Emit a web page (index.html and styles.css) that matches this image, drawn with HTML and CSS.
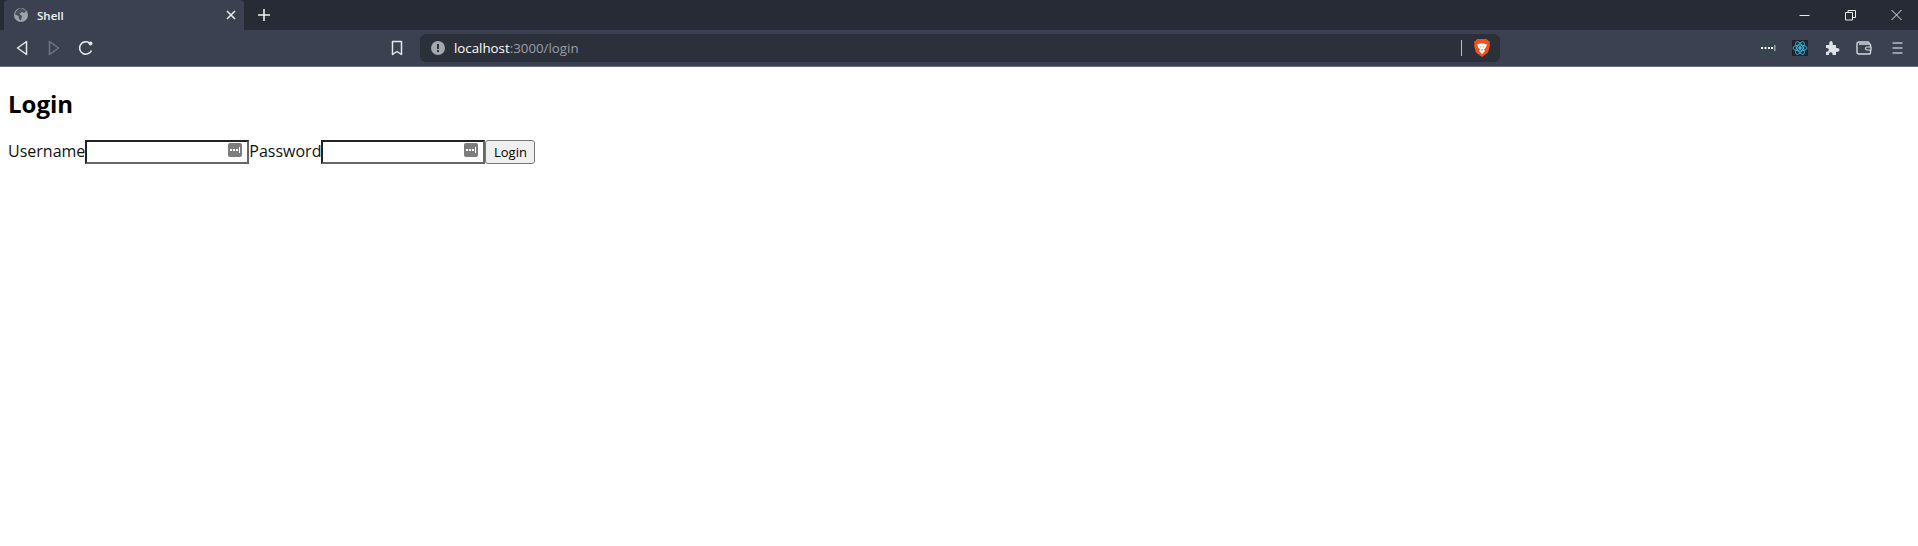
FILE: index.html

```html
<!DOCTYPE html>
<html lang="en">
<head>
  <meta charset="UTF-8">
  <title>Shell</title>
  <link rel="stylesheet" href="styles.css">
</head>
<body>
  <div class="titlebar">
    <div class="tab">
      <svg class="globe" width="16" height="16" viewBox="0 0 16 16">
        <circle cx="8" cy="8" r="7" fill="#9ea3ad"/>
        <path d="M8 1c1.500 1 3.500 1.200 5 2.500L11.500 6 8.500 5 6.500 7l2.500 2-1 4.500-2-1.500-.5-3L2 7.500C2.500 4 5 1.500 8 1z" fill="#4a505e"/>
      </svg>
      <span class="tab-title">Shell</span>
      <svg class="tab-close" width="10" height="10" viewBox="0 0 10 10">
        <path d="M1 1l8 8M9 1L1 9" stroke="#e8eaee" stroke-width="1.600"/>
      </svg>
    </div>
    <svg class="new-tab" width="14" height="14" viewBox="0 0 14 14">
      <path d="M7 1v12M1 7h12" stroke="#f0f1f4" stroke-width="1.600"/>
    </svg>
    <div class="window-btns">
      <svg width="11" height="12" viewBox="0 0 11 12"><path d="M.5 6.500h10" stroke="#e8eaee"/></svg>
      <svg width="11" height="12" viewBox="0 0 11 12"><path d="M.5 3.500h7v7.500h-7zM3 3.500V1.500h7.500V8.500h-3" fill="none" stroke="#e8eaee"/></svg>
      <svg width="11" height="12" viewBox="0 0 11 12"><path d="M.5 1l10 10M10.500 1l-10 10" stroke="#e8eaee"/></svg>
    </div>
  </div>

  <div class="toolbar">
    <div class="nav-btns">
      <svg width="12" height="16" viewBox="0 0 12 16"><path d="M10.500 1.500v13L1.500 8z" fill="none" stroke="#e4e6eb" stroke-width="1.500" stroke-linejoin="round"/></svg>
      <svg class="forward" width="12" height="16" viewBox="0 0 12 16"><path d="M1.500 1.500v13l9-6.500z" fill="none" stroke="#6f7583" stroke-width="1.500" stroke-linejoin="round"/></svg>
      <svg width="16" height="16" viewBox="0 0 16 16"><path d="M13.500 10.500A6.200 6.200 0 1 1 11.500 3" fill="none" stroke="#e4e6eb" stroke-width="1.600"/><circle cx="12.500" cy="3.500" r="2" fill="#e4e6eb"/></svg>
    </div>
    <svg class="bookmark" width="12" height="16" viewBox="0 0 12 16"><path d="M1.500 1.500h9v13L6 11.500l-4.500 3z" fill="none" stroke="#e4e6eb" stroke-width="1.500" stroke-linejoin="round"/></svg>
    <div class="urlbar">
      <svg class="info" width="14" height="14" viewBox="0 0 14 14">
        <circle cx="7" cy="7" r="7" fill="#a3a7b0"/>
        <rect x="6" y="3" width="2" height="5" fill="#2f333e"/>
        <rect x="6" y="9" width="2" height="2" fill="#2f333e"/>
      </svg>
      <span class="url"><span class="host">localhost</span>:3000/login</span>
      <span class="url-sep"></span>
      <svg class="brave" width="18" height="20" viewBox="0 0 18 20">
        <path d="M4.500 1h9L17 4 16.500 6 17 7.500 15 14.500 9 19 3 14.500 1 7.500 1.500 6 1 4z" fill="#f1511b"/>
        <path d="M4 6.500 7 5.500h4l3 1-1.500 3.500L11 11.500l1 1.500-3 3-3-3 1-1.500L5.500 10z" fill="#fff"/>
        <path d="M7 8.500h1.200L8 10zM9.800 8.500H11L10 10zM8 11.500h2L9 13z" fill="#f1511b"/>
      </svg>
    </div>
    <div class="ext-btns">
      <span class="ext-box ext-dots">
        <svg width="16" height="6" viewBox="0 0 16 6"><path d="M1 2h2v2H1zM4.500 2h2v2h-2zM8 2h2v2H8zM11 2h2v2h-2z" fill="#fff"/><rect x="14" y="0" width="1.500" height="6" fill="#9aa0ab"/></svg>
      </span>
      <span class="ext-box ext-react">
        <svg width="16" height="16" viewBox="0 0 16 16" fill="none" stroke="#35b5dc" stroke-width="1">
          <ellipse cx="8" cy="8" rx="7" ry="3"/>
          <ellipse cx="8" cy="8" rx="7" ry="3" transform="rotate(60 8 8)"/>
          <ellipse cx="8" cy="8" rx="7" ry="3" transform="rotate(120 8 8)"/>
          <circle cx="8" cy="8" r="1.300" fill="#35b5dc"/>
        </svg>
      </span>
      <svg width="16" height="16" viewBox="0 0 16 16"><path d="M2 5h3.200C4.800 2.500 6 1 7 1s2.200 1.500 1.800 4H12v3.200c2-.4 3.500.5 3.500 1.800S14 12.200 12 11.800V15H8.500c.4-1.800-.5-2.800-1.800-2.800S4.500 13.200 5 15H2v-3.300c1.700.3 2.800-.6 2.800-1.900S3.700 7.600 2 8z" fill="#dfe2e8"/></svg>
      <svg width="16" height="14" viewBox="0 0 16 14"><path d="M13 3V2a1 1 0 0 0-1-1H3a2 2 0 0 0-2 2v8a2 2 0 0 0 2 2h10.500a1 1 0 0 0 1-1V4a1 1 0 0 0-1-1H3" fill="none" stroke="#d5d8df" stroke-width="1.400"/><path d="M15 6h-4a1.500 1.500 0 0 0 0 3h4z" fill="#3d4454" stroke="#d5d8df" stroke-width="1.200"/></svg>
      <svg class="menu" width="11" height="12" viewBox="0 0 11 12"><path d="M.5 1h10M.5 6h10M.5 11h10" stroke="#b8bcc6" stroke-width="1.600"/></svg>
    </div>
  </div>

  <main class="page">
    <h1>Login</h1>
    <form class="login-form">
      <label for="username">Username</label><span class="field"><input id="username" type="text"><svg class="key-icon" width="14" height="14" viewBox="0 0 14 14"><rect width="14" height="14" rx="2" fill="#7d7d7d"/><path d="M2 6h2v2H2zM5 6h2v2H5zM8 6h2v2H8z" fill="#fff"/><rect x="11" y="4" width="1" height="6" fill="#fff"/></svg></span><label for="password">Password</label><span class="field"><input id="password" type="password"><svg class="key-icon" width="14" height="14" viewBox="0 0 14 14"><rect width="14" height="14" rx="2" fill="#7d7d7d"/><path d="M2 6h2v2H2zM5 6h2v2H5zM8 6h2v2H8z" fill="#fff"/><rect x="11" y="4" width="1" height="6" fill="#fff"/></svg></span><button type="button">Login</button>
    </form>
  </main>
</body>
</html>
```

FILE: styles.css

```css
body {
  margin: 0;
  background-color: #fff;
  font-family: "Open Sans", sans-serif;
}

.titlebar {
  display: flex;
  align-items: center;
  height: 30px;
  padding-left: 4px;
  background-color: #272b36;
}

.tab {
  display: flex;
  align-items: center;
  align-self: stretch;
  width: 240px;
  box-sizing: border-box;
  padding: 0 8px 0 9px;
  background-color: #3b4151;
  border-radius: 4px 4px 0 0;
}

.tab-title {
  flex: 1;
  margin-left: 8px;
  font-family: "Open Sans", sans-serif;
  font-size: 11.500px;
  font-weight: 600;
  color: #f2f3f5;
}

.new-tab {
  margin-left: 13px;
}

.window-btns {
  display: flex;
  align-items: center;
  gap: 35px;
  margin-left: auto;
  padding-right: 16px;
}

.toolbar {
  display: flex;
  align-items: center;
  height: 36px;
  background-color: #3b4151;
  border-bottom: 1px solid #6b7080;
}

.nav-btns {
  display: flex;
  align-items: center;
  gap: 19px;
  padding-left: 16px;
}

.forward {
  margin: 0 -1px 0 1px;
}

.bookmark {
  margin-left: 297px;
}

.urlbar {
  display: flex;
  align-items: center;
  width: 1080px;
  height: 28px;
  box-sizing: border-box;
  margin-left: 17px;
  padding: 0 9px 0 11px;
  background-color: #2c303b;
  border-radius: 6px;
}

.url {
  flex: 1;
  margin-left: 9px;
  font-family: "Open Sans", sans-serif;
  font-size: 13.300px;
  color: #9a9ea8;
}

.host {
  color: #fff;
}

.url-sep {
  width: 1px;
  height: 16px;
  margin-right: 11px;
  background-color: #b9bcc4;
}

.ext-btns {
  display: flex;
  align-items: center;
  gap: 16px;
  margin-left: auto;
  padding-right: 15px;
}

.menu {
  margin-left: 4px;
}

.ext-box {
  display: flex;
  align-items: center;
  justify-content: center;
  width: 16px;
  height: 16px;
}

.ext-dots {
  background-color: #36444c;
  border-radius: 2px;
}

.ext-react {
  background-color: #20232a;
}

.page {
  padding: 0 8px;
}

h1 {
  margin: 0;
  padding-top: 20px;
  font-size: 24px;
  line-height: 33px;
  font-weight: 700;
  color: #000;
}

.login-form {
  margin-top: 20px;
  font-size: 16px;
  color: #111;
  line-height: 24px;
}

label {
  display: inline-block;
  line-height: 22px;
  vertical-align: top;
}

.field {
  position: relative;
  display: inline-block;
  height: 24px;
  vertical-align: top;
}

input {
  width: 164px;
  height: 24px;
  box-sizing: border-box;
  border: 2px solid;
  border-color: #222 #666 #666 #222;
  background-color: #fff;
  padding: 1px 2px;
  vertical-align: top;
}

.key-icon {
  position: absolute;
  top: 3px;
  right: 7px;
}

button {
  width: 50px;
  height: 24px;
  padding: 0;
  border: 1px solid #767676;
  border-radius: 3px;
  background-color: #efefef;
  font-family: "Open Sans", sans-serif;
  font-size: 13px;
  color: #000;
  vertical-align: top;
}
```
